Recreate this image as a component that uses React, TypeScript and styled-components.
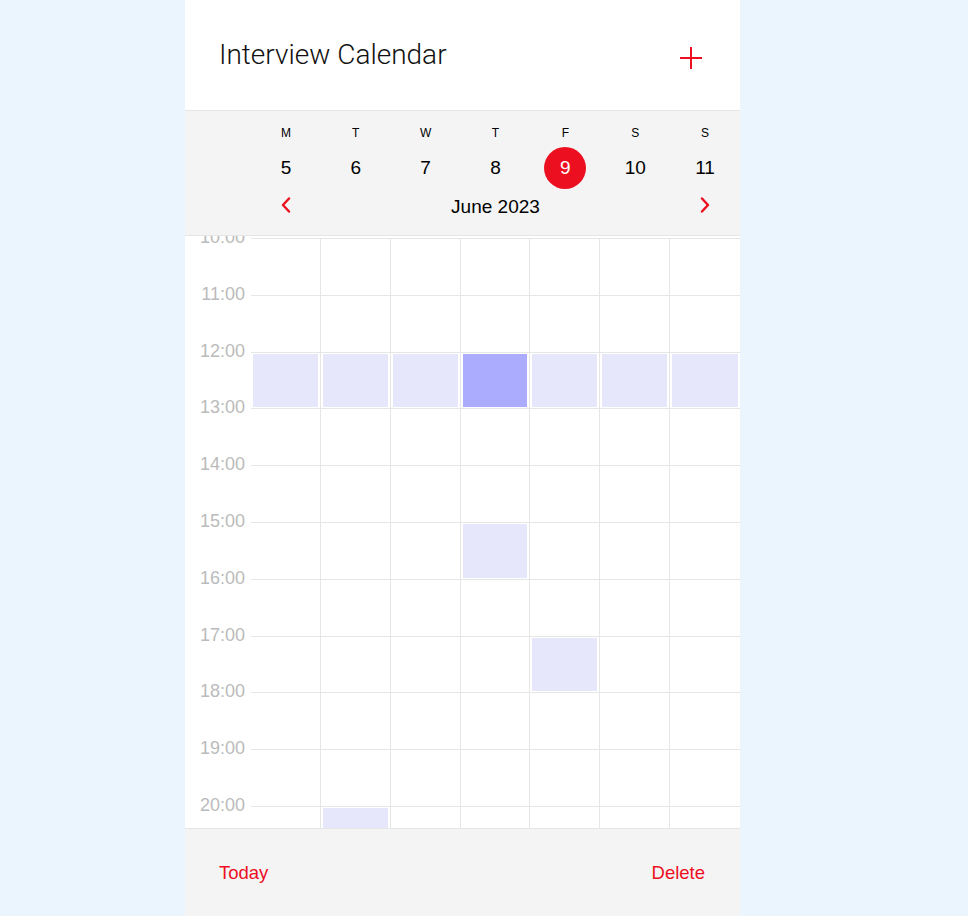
import React from "react"
import styled, { createGlobalStyle } from "styled-components"

const RED = "#ec0f1f"
const LINE = "#e6e6e6"
const PANEL = "#f4f4f4"

const GlobalStyle = createGlobalStyle`
  *, *::before, *::after { box-sizing: border-box; }
  html, body { margin: 0; height: 100%; }
  body {
    background: #ebf5fe;
    font-family: "Liberation Sans", Arial, sans-serif;
    color: #000;
  }
  #root { height: 100%; }
`

const Page = styled.div`
  height: 100vh;
  display: flex;
  justify-content: center;
  padding-right: 43px;
`

const Phone = styled.div`
  width: 555px;
  height: 100%;
  display: flex;
  flex-direction: column;
  background: #fff;
  overflow: hidden;
`

const Header = styled.header`
  flex: none;
  height: 111px;
  display: flex;
  align-items: center;
  justify-content: space-between;
  padding: 0 38px 0 34px;
  border-bottom: 1px solid ${LINE};
`

const Title = styled.h1`
  margin: 0 0 2px;
  font-family: Roboto, "Liberation Sans", sans-serif;
  font-weight: 300;
  font-size: 28px;
  color: #111;
`

const IconButton = styled.button`
  border: 0;
  padding: 0;
  margin-top: 5px;
  background: none;
  display: flex;
  cursor: pointer;
  color: ${RED};
`

const Week = styled.section`
  flex: none;
  display: grid;
  grid-template-columns: 66px repeat(7, 1fr);
  grid-template-rows: 22px 42px 36px;
  padding: 14px 0 10px;
  background: ${PANEL};
  border-bottom: 1px solid ${LINE};
`

const Letter = styled.div<{ $col: number }>`
  grid-row: 1;
  grid-column: ${(p) => p.$col};
  align-self: start;
  height: 16px;
  line-height: 16px;
  font-size: 12px;
  text-align: center;
`

const DayNumber = styled.div<{ $col: number; $selected: boolean }>`
  grid-row: 2;
  grid-column: ${(p) => p.$col};
  justify-self: center;
  width: 42px;
  height: 42px;
  border-radius: 50%;
  display: flex;
  align-items: center;
  justify-content: center;
  font-size: 19px;
  background: ${(p) => (p.$selected ? RED : "transparent")};
  color: ${(p) => (p.$selected ? "#fff" : "#000")};
`

const NavArrow = styled.button<{ $col: number }>`
  grid-row: 3;
  grid-column: ${(p) => p.$col};
  justify-self: center;
  align-self: center;
  border: 0;
  padding: 0;
  background: none;
  display: flex;
  color: ${RED};
  cursor: pointer;
  margin-top: -4px;
`

// spans Wed..Fri so the label sits centred under Thursday
const Month = styled.div`
  grid-row: 3;
  grid-column: 4 / span 3;
  align-self: center;
  text-align: center;
  font-size: 19px;
`

const Schedule = styled.div`
  flex: 1;
  overflow: hidden;
  padding-top: 2px;
`

const HourRow = styled.div`
  display: grid;
  grid-template-columns: 66px repeat(7, 1fr);
  height: 56.8px;
`

const TimeLabel = styled.div`
  margin-top: -12px;
  padding-right: 6px;
  height: 22px;
  line-height: 22px;
  text-align: right;
  font-size: 18px;
  color: #bbb;
`

const Cell = styled.div<{ $last: boolean }>`
  border-top: 1px solid ${LINE};
  border-right: ${(p) => (p.$last ? "none" : `1px solid ${LINE}`)};
  padding: 1px 2px;
`

const Slot = styled.div<{ $active: boolean }>`
  height: 100%;
  background: ${(p) => (p.$active ? "#acacff" : "#e7e7fb")};
`

const Footer = styled.footer`
  flex: none;
  height: 88px;
  display: flex;
  align-items: center;
  justify-content: space-between;
  padding: 0 35px 0 34px;
  background: ${PANEL};
  border-top: 1px solid ${LINE};
`

const FooterButton = styled.button`
  border: 0;
  padding: 0;
  background: none;
  font-family: inherit;
  font-size: 18.5px;
  color: ${RED};
  cursor: pointer;
`

const letters = ["M", "T", "W", "T", "F", "S", "S"]
const dates = [5, 6, 7, 8, 9, 10, 11]
const hours = [10, 11, 12, 13, 14, 15, 16, 17, 18, 19, 20, 21, 22]

// day index (0 = Monday) -> hour
const events = [
  { day: 0, hour: 12 },
  { day: 1, hour: 12 },
  { day: 2, hour: 12 },
  { day: 3, hour: 12, active: true },
  { day: 4, hour: 12 },
  { day: 5, hour: 12 },
  { day: 6, hour: 12 },
  { day: 3, hour: 15 },
  { day: 4, hour: 17 },
  { day: 1, hour: 20 },
]

const Chevron = ({ left }: { left?: boolean }) => (
  <svg width="10" height="16" viewBox="0 0 10 16" fill="none">
    <polyline
      points={left ? "8,1.5 2,8 8,14.5" : "2,1.5 8,8 2,14.5"}
      stroke="currentColor"
      strokeWidth="2.4"
      strokeLinecap="round"
      strokeLinejoin="round"
    />
  </svg>
)

export default function App() {
  const selected = 9

  return (
    <Page>
      <GlobalStyle />
      <Phone>
        <Header>
          <Title>Interview Calendar</Title>
          <IconButton aria-label="Add">
            <svg width="22" height="22" viewBox="0 0 22 22">
              <path d="M11 0V22M0 11H22" stroke="currentColor" strokeWidth="2" />
            </svg>
          </IconButton>
        </Header>

        <Week>
          {letters.map((l, i) => (
            <Letter key={"l" + i} $col={i + 2}>
              {l}
            </Letter>
          ))}
          {dates.map((d, i) => (
            <DayNumber key={d} $col={i + 2} $selected={d === selected}>
              {d}
            </DayNumber>
          ))}
          <NavArrow $col={2} aria-label="Previous week">
            <Chevron left />
          </NavArrow>
          <Month>June 2023</Month>
          <NavArrow $col={8} aria-label="Next week">
            <Chevron />
          </NavArrow>
        </Week>

        <Schedule>
          {hours.map((h) => (
            <HourRow key={h}>
              <TimeLabel>{h}:00</TimeLabel>
              {dates.map((_, day) => {
                const ev = events.find((e) => e.day === day && e.hour === h)
                return (
                  <Cell key={day} $last={day === 6}>
                    {ev && <Slot $active={!!ev.active} />}
                  </Cell>
                )
              })}
            </HourRow>
          ))}
        </Schedule>

        <Footer>
          <FooterButton>Today</FooterButton>
          <FooterButton>Delete</FooterButton>
        </Footer>
      </Phone>
    </Page>
  )
}
